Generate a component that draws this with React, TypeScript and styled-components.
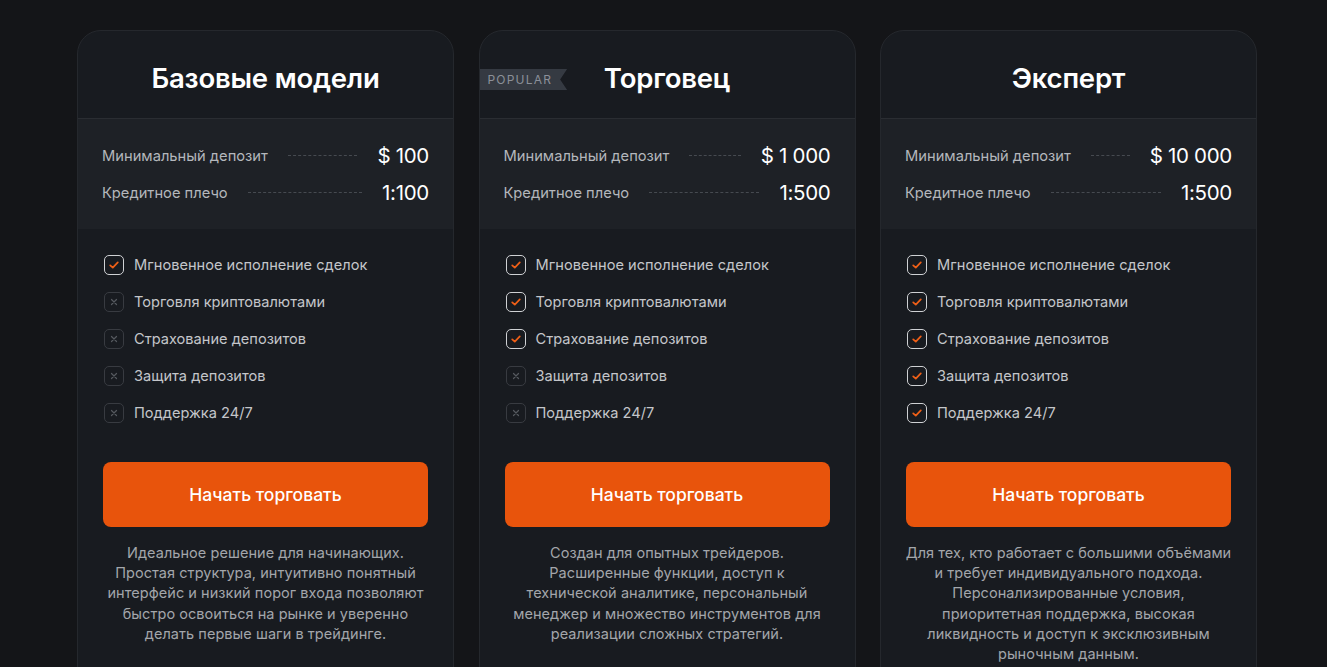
import React from "react";
import styled, { createGlobalStyle } from "styled-components";

const Global = createGlobalStyle`
html, body {
  margin: 0;
  padding: 0;
  background: #141518;
  font-family: Inter, "Noto Sans", sans-serif;
  color: #fff;
}
`;

const Page = styled.main`
min-height: 667px;
padding: 30px 0 40px 77px;
box-sizing: border-box;
overflow: hidden;
`;

const Grid = styled.div`
display: grid;
grid-template-columns: repeat(3, 377px);
gap: 24.5px;
`;

const Card = styled.section`
position: relative;
background: #181b20;
border: 1px solid #25282d;
border-radius: 24px;
overflow: hidden;
display: flex;
flex-direction: column;
padding-bottom: 40px;
`;

const Head = styled.header`
height: 88px;
padding-top: 6px;
box-sizing: border-box;
display: flex;
align-items: center;
justify-content: center;
border-bottom: 1px solid #2a2d32;
`;

const Title = styled.h2`
margin: 0;
font-size: 27.5px;
font-weight: 600;
letter-spacing: -0.2px;
color: #fff;
`;

const Ribbon = styled.span`
position: absolute;
left: 0;
top: 38px;
height: 21px;
padding: 0 15px 0 8px;
display: flex;
align-items: center;
background: #353a42;
color: #8b9099;
font-size: 12px;
letter-spacing: 1.2px;
clip-path: polygon(0 0, 100% 0, calc(100% - 7px) 50%, 100% 100%, 0 100%);
`;

const Stats = styled.div`
background: #1e2126;
padding: 20px 24px 20px 24px;
height: 110px;
box-sizing: border-box;
display: flex;
flex-direction: column;
justify-content: center;
gap: 11px;
`;

const StatRow = styled.div`
display: flex;
align-items: center;
gap: 20px;
height: 26px;
`;

const StatLabel = styled.span`
font-size: 14.7px;
color: #b4b7bc;
white-space: nowrap;
`;

const Dots = styled.span`
flex: 1;
border-top: 1px dashed #464a50;
`;

const StatValue = styled.span`
font-size: 20.5px;
color: #fff;
white-space: nowrap;
letter-spacing: -0.3px;
`;

const Features = styled.ul`
list-style: none;
margin: 0;
padding: 26px 25px 0 26px;
display: flex;
flex-direction: column;
gap: 17px;
`;

const Feature = styled.li`
display: flex;
align-items: center;
gap: 10px;
height: 20px;
font-size: 14.6px;
color: #c4c6ca;
`;

const Box = styled.span<{ $on: boolean }>`
width: 18px;
height: 18px;
border-radius: 5px;
border: 1px solid ${(p) => (p.$on ? "#cfd1d4" : "#383b41")};
display: flex;
align-items: center;
justify-content: center;
flex-shrink: 0;
`;

const Button = styled.button`
margin: 39px 25px 0 25px;
height: 65px;
border: none;
border-radius: 8px;
background: #e8540c;
color: #fff;
font-family: inherit;
font-size: 17.5px;
font-weight: 500;
cursor: pointer;
`;

const Desc = styled.p<{ $inset: number }>`
margin: 16px ${(p) => p.$inset}px 0 ${(p) => p.$inset}px;
text-align: center;
font-size: 14.5px;
letter-spacing: 0.05px;
line-height: 20.2px;
color: #a3a6ab;
`;

type Plan = {
  title: string;
  popular?: boolean;
  deposit: string;
  leverage: string;
  on: number;
  inset: number;
  desc: string;
};

const features = [
  "Мгновенное исполнение сделок",
  "Торговля криптовалютами",
  "Страхование депозитов",
  "Защита депозитов",
  "Поддержка 24/7",
];

const plans: Plan[] = [
  {
    title: "Базовые модели",
    deposit: "$ 100",
    leverage: "1:100",
    on: 1,
    inset: 22,
    desc:
      "Идеальное решение для начинающих. Простая структура, интуитивно понятный интерфейс и низкий порог входа позволяют быстро освоиться на рынке и уверенно делать первые шаги в трейдинге.",
  },
  {
    title: "Торговец",
    popular: true,
    deposit: "$ 1 000",
    leverage: "1:500",
    on: 3,
    inset: 25,
    desc:
      "Создан для опытных трейдеров. Расширенные функции, доступ к технической аналитике, персональный менеджер и множество инструментов для реализации сложных стратегий.",
  },
  {
    title: "Эксперт",
    deposit: "$ 10 000",
    leverage: "1:500",
    on: 5,
    inset: 22,
    desc:
      "Для тех, кто работает с большими объёмами и требует индивидуального подхода. Персонализированные условия, приоритетная поддержка, высокая ликвидность и доступ к эксклюзивным рыночным данным.",
  },
];

const Check = () => (
  <svg width="12" height="12" viewBox="0 0 12 12" fill="none">
    <path d="M2.2 6.3 L4.8 8.7 L9.8 3.4" stroke="#ef5f17" strokeWidth="1.7" strokeLinecap="round" strokeLinejoin="round" />
  </svg>
);

const Cross = () => (
  <svg width="10" height="10" viewBox="0 0 10 10" fill="none">
    <path d="M2.5 2.5 L7.5 7.5 M7.5 2.5 L2.5 7.5" stroke="#55595f" strokeWidth="1.2" strokeLinecap="round" />
  </svg>
);

export default function App() {
  return (
    <Page>
      <Global />
      <Grid>
        {plans.map((p) => (
          <Card key={p.title}>
            {p.popular && <Ribbon>POPULAR</Ribbon>}
            <Head>
              <Title>{p.title}</Title>
            </Head>
            <Stats>
              <StatRow>
                <StatLabel>Минимальный депозит</StatLabel>
                <Dots />
                <StatValue>{p.deposit}</StatValue>
              </StatRow>
              <StatRow>
                <StatLabel>Кредитное плечо</StatLabel>
                <Dots />
                <StatValue>{p.leverage}</StatValue>
              </StatRow>
            </Stats>
            <Features>
              {features.map((f, i) => (
                <Feature key={f}>
                  <Box $on={i < p.on}>{i < p.on ? <Check /> : <Cross />}</Box>
                  {f}
                </Feature>
              ))}
            </Features>
            <Button>Начать торговать</Button>
            <Desc $inset={p.inset}>{p.desc}</Desc>
          </Card>
        ))}
      </Grid>
    </Page>
  );
}
